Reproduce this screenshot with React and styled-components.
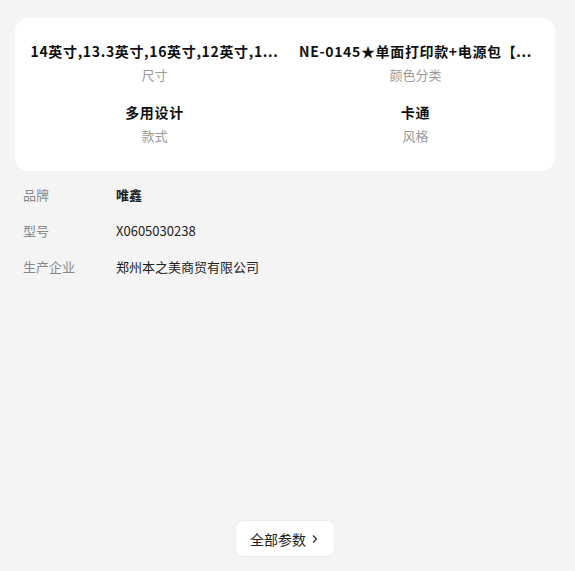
import React from "react";
import styled, { createGlobalStyle } from "styled-components";

const Global = createGlobalStyle`
  html, body { margin: 0; padding: 0; background: #f4f4f4; }
  body { font-family: "Noto Sans CJK SC", "Noto Sans", sans-serif; }
`;

const Page = styled.div`
  min-height: 571px;
  box-sizing: border-box;
  display: flex;
  flex-direction: column;
  padding: 18px 20px 14px 15px;
`;

const Card = styled.div`
  background: #fff;
  border-radius: 14px;
  padding: 14px 9px 19px;
  display: grid;
  grid-template-columns: 1fr 1fr;
  row-gap: 2px;
`;

const Cell = styled.div`
  min-width: 0;
  padding: 8px 6px 6px;
  display: flex;
  flex-direction: column;
  align-items: center;
  gap: 3px;
`;

const Value = styled.div`
  font-size: 14px;
  font-weight: 700;
  color: #111;
  line-height: 22px;
  white-space: nowrap;
  letter-spacing: 0.65px;
`;

const Label = styled.div`
  font-size: 13px;
  color: #999;
  line-height: 20px;
`;

const List = styled.div`
  padding: 5px 0 0 8px;
`;

const Row = styled.div`
  display: flex;
  align-items: center;
  height: 36px;
  font-size: 13px;
`;

const RowKey = styled.div`
  width: 93px;
  color: #888;
`;

const RowVal = styled.div`
  color: #222;
  font-weight: ${(p) => (p.$bold ? 600 : 400)};
`;

const Footer = styled.div`
  margin-top: auto;
  display: flex;
  justify-content: center;
`;

const Button = styled.button`
  display: flex;
  align-items: center;
  justify-content: center;
  gap: 4px;
  width: 100px;
  height: 37px;
  padding: 0;
  background: #fff;
  border: 1px solid #ececec;
  border-radius: 8px;
  font-family: inherit;
  font-size: 14px;
  color: #222;
`;

const specs = [
  { v: "14英寸,13.3英寸,16英寸,12英寸,1...", l: "尺寸" },
  { v: "NE-0145★单面打印款+电源包【...", l: "颜色分类" },
  { v: "多用设计", l: "款式" },
  { v: "卡通", l: "风格" },
];

const rows = [
  { k: "品牌", v: "唯鑫", b: true },
  { k: "型号", v: "X0605030238" },
  { k: "生产企业", v: "郑州本之美商贸有限公司" },
];

export default function App() {
  return (
    <>
      <Global />
      <Page>
        <Card>
          {specs.map((s) => (
            <Cell key={s.l}>
              <Value>{s.v}</Value>
              <Label>{s.l}</Label>
            </Cell>
          ))}
        </Card>
        <List>
          {rows.map((r) => (
            <Row key={r.k}>
              <RowKey>{r.k}</RowKey>
              <RowVal $bold={r.b}>{r.v}</RowVal>
            </Row>
          ))}
        </List>
        <Footer>
          <Button>
            全部参数
            <svg width="10" height="12" viewBox="0 0 10 12">
              <path d="M3 2.5 L6.5 6 L3 9.5" fill="none" stroke="#333" strokeWidth="1.3" />
            </svg>
          </Button>
        </Footer>
      </Page>
    </>
  );
}
